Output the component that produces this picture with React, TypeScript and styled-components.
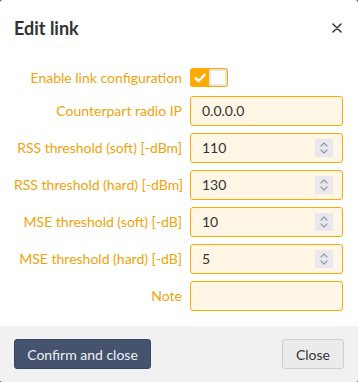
import styled, {createGlobalStyle} from "styled-components";

const GlobalStyle = createGlobalStyle`
    html, body {
        margin: 0;
        padding: 0;
        background: #5a5a5a;
    }
    body {
        font-family: Lato, "Open Sans", sans-serif;
    }
    * {
        box-sizing: border-box;
    }
`

const fields = [
    {label: 'Counterpart radio IP', value: '0.0.0.0', spin: false},
    {label: 'RSS threshold (soft) [-dBm]', value: '110', spin: true},
    {label: 'RSS threshold (hard) [-dBm]', value: '130', spin: true},
    {label: 'MSE threshold (soft) [-dB]', value: '10', spin: true},
    {label: 'MSE threshold (hard) [-dB]', value: '5', spin: true},
    {label: 'Note', value: '', spin: false},
]

export default function App() {
    return (
        <>
            <GlobalStyle/>
            <Modal>
                <Header>
                    <Title>Edit link</Title>
                    <CloseX aria-label="close">
                        <svg width="10" height="10" viewBox="0 0 10 10">
                            <path d="M1 1 L9 9 M9 1 L1 9" stroke="#333" strokeWidth="1.5" strokeLinecap="round"/>
                        </svg>
                    </CloseX>
                </Header>
                <Body>
                    <Form>
                        <Label>Enable link configuration</Label>
                        <ToggleCell>
                            <Toggle>
                                <ToggleCheck>
                                    <svg width="12" height="10" viewBox="0 0 12 10">
                                        <path d="M1.5 5.2 L4.5 8 L10.5 1.8" stroke="#fff" strokeWidth="2.4" fill="none"
                                              strokeLinecap="round" strokeLinejoin="round"/>
                                    </svg>
                                </ToggleCheck>
                                <Knob/>
                            </Toggle>
                        </ToggleCell>
                        {fields.map(f => (
                            <Row key={f.label}>
                                <Label>{f.label}</Label>
                                <InputBox>
                                    <Value>{f.value}</Value>
                                    {f.spin && (
                                        <Spin>
                                            <svg width="10" height="14" viewBox="0 0 10 14">
                                                <path d="M2 5 L5 2 L8 5 M2 9 L5 12 L8 9" stroke="#9a9aa6" strokeWidth="1.2"
                                                      fill="none" strokeLinecap="round" strokeLinejoin="round"/>
                                            </svg>
                                        </Spin>
                                    )}
                                </InputBox>
                            </Row>
                        ))}
                    </Form>
                </Body>
                <Footer>
                    <PrimaryButton>Confirm and close</PrimaryButton>
                    <SecondaryButton>Close</SecondaryButton>
                </Footer>
            </Modal>
        </>
    );
}

const Modal = styled.div`
    width: 358px;
    height: 382px;
    background: #fff;
    border-radius: 3px;
    overflow: hidden;
    display: flex;
    flex-direction: column;
`

const Header = styled.div`
    height: 56px;
    padding: 0 15px 0 14px;
    display: flex;
    align-items: center;
    justify-content: space-between;
`

const Title = styled.h3`
    margin: 0;
    font-size: 18px;
    font-weight: 700;
    color: #333;
`

const CloseX = styled.span`
    display: flex;
    width: 10px;
    height: 10px;
    margin-right: 1px;
`

const Body = styled.div`
    padding: 11px 15px 15px 14px;
    flex: 1;
`

const Form = styled.div`
    display: grid;
    grid-template-columns: 168px 153px;
    column-gap: 8px;
    row-gap: 7px;
    align-items: center;
`

const Row = styled.div`
    display: contents;
`

const Label = styled.label`
    text-align: right;
    color: #f0a30a;
    font-size: 14px;
    white-space: nowrap;
`

const ToggleCell = styled.div`
    height: 22px;
    display: flex;
    align-items: center;
`

const Toggle = styled.div`
    width: 38px;
    height: 19px;
    background: #ffaa00;
    border-radius: 3px;
    display: flex;
    align-items: center;
    justify-content: space-between;
    padding: 1px;
`

const ToggleCheck = styled.span`
    width: 18px;
    display: flex;
    justify-content: center;
`

const Knob = styled.span`
    width: 18px;
    height: 17px;
    background: #fff;
    border: 2px solid #e6e6e6;
    border-radius: 2px;
`

const InputBox = styled.div`
    height: 30px;
    border: 1px solid #ffaa00;
    border-radius: 3px;
    background: #fff6e5;
    display: flex;
    align-items: center;
    justify-content: space-between;
    padding: 0 9px 0 11px;
`

const Value = styled.span`
    font-size: 14px;
    color: #333;
`

const Spin = styled.span`
    width: 18px;
    height: 18px;
    background: #e8e8ee;
    display: flex;
    align-items: center;
    justify-content: center;
`

const Footer = styled.div`
    height: 57px;
    background: #f1f1f1;
    display: flex;
    align-items: center;
    justify-content: space-between;
    padding: 1px 14px 0 14px;
`

const Button = styled.button`
    height: 30px;
    border-radius: 3px;
    font-family: Lato, "Open Sans", sans-serif;
    font-size: 14px;
    padding: 0;
    white-space: nowrap;
    cursor: pointer;
`

const PrimaryButton = styled(Button)`
    width: 137px;
    background: #45536f;
    border: 1px solid #3a4660;
    color: #eef0f4;
`

const SecondaryButton = styled(Button)`
    width: 62px;
    background: #ebebeb;
    border: 1px solid #cfcfcf;
    color: #333;
`
